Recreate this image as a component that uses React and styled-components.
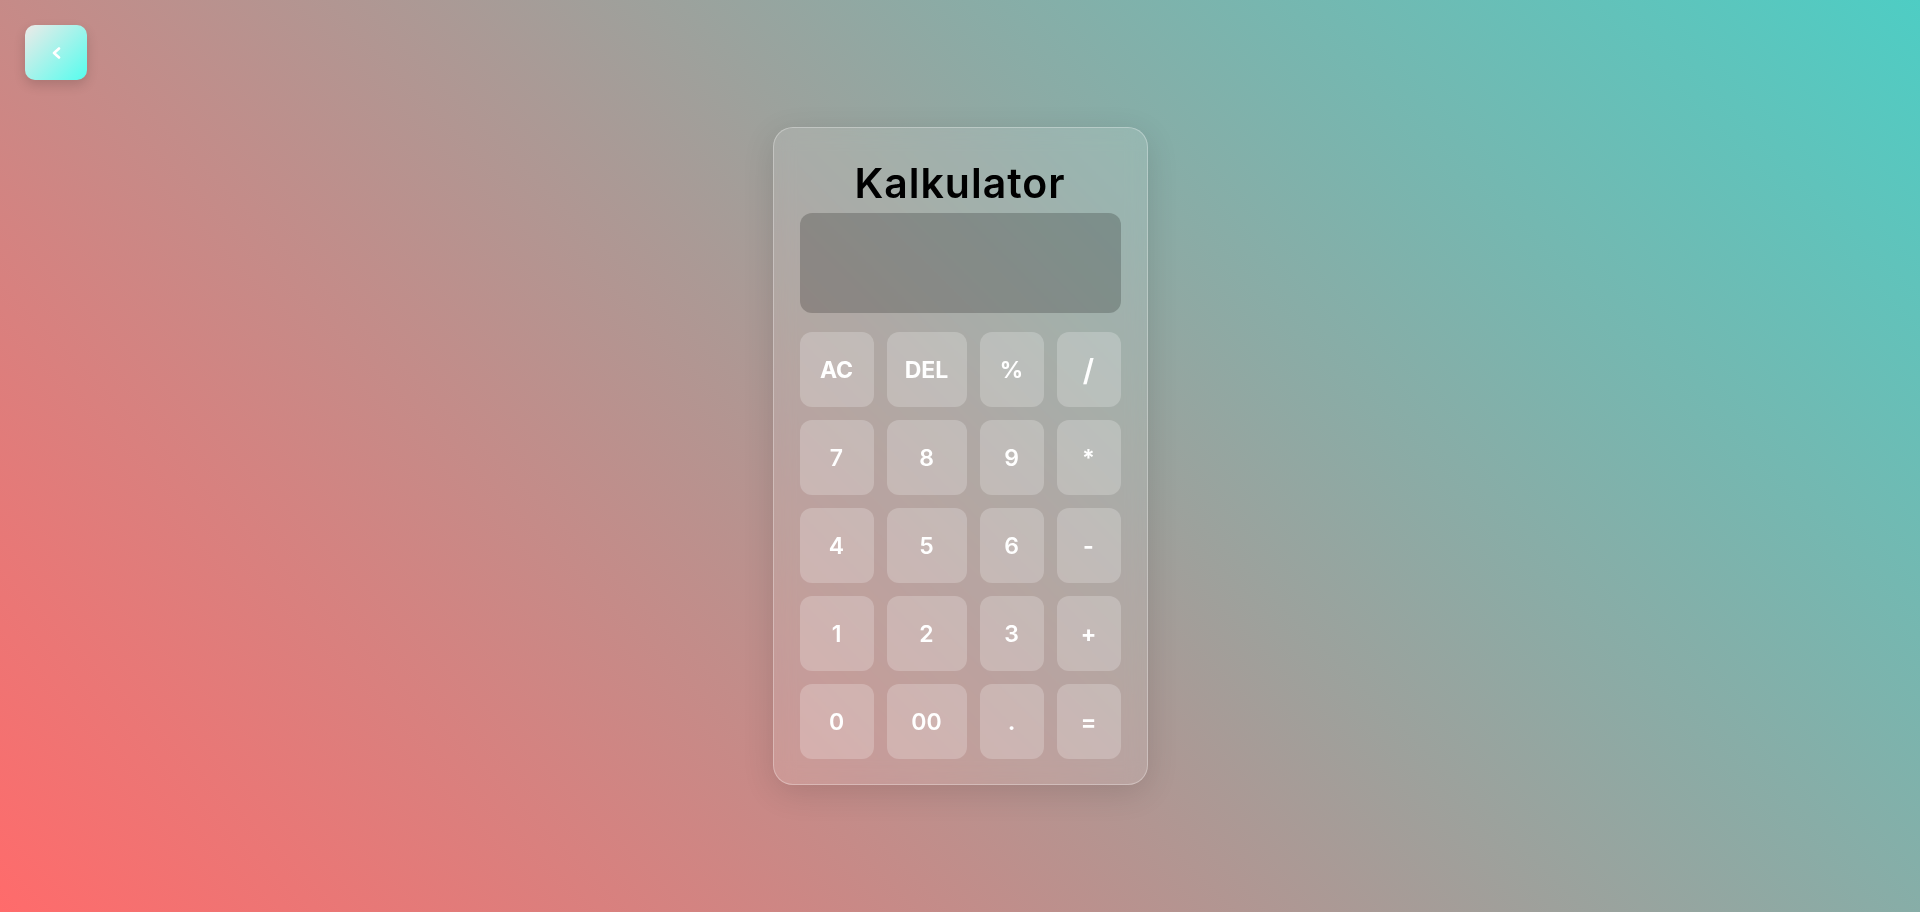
import React from 'react';
import styled, { createGlobalStyle } from 'styled-components';

const GlobalStyle = createGlobalStyle`
  * {
    box-sizing: border-box;
  }

  body {
    margin: 0;
    font-family: Inter, "Noto Sans", sans-serif;
  }
`;

const Page = styled.div`
  position: relative;
  min-height: 100vh;
  display: flex;
  align-items: center;
  justify-content: center;
  background: linear-gradient(45deg, #ff6b6b 0%, #4ecdc4 100%);
`;

const BackButton = styled.button`
  position: absolute;
  top: 25px;
  left: 25px;
  width: 62px;
  height: 55px;
  border: none;
  border-radius: 10px;
  display: flex;
  align-items: center;
  justify-content: center;
  background: linear-gradient(135deg, #eeeae8 0%, #55fdee 100%);
  box-shadow: 0 5px 12px rgba(0, 0, 0, 0.15);
  cursor: pointer;

  svg {
    width: 10px;
    height: 12px;
  }
`;

const Card = styled.div`
  width: 375px;
  padding: 25px 26px 25px;
  border: 1px solid rgba(255, 255, 255, 0.3);
  border-radius: 20px;
  background: rgba(255, 255, 255, 0.12);
  backdrop-filter: blur(10px);
  box-shadow: 0 8px 32px rgba(0, 0, 0, 0.12);
`;

const Title = styled.h1`
  margin: 6px 0 6px;
  font-size: 41px;
  line-height: 48px;
  font-weight: 600;
  letter-spacing: 1px;
  color: #000;
  text-align: center;
`;

const Display = styled.div`
  height: 100px;
  margin-bottom: 19px;
  border-radius: 12px;
  background: rgba(0, 0, 0, 0.2);
`;

const Keypad = styled.div`
  display: grid;
  grid-template-columns: 74px 80px 64px 64px;
  grid-auto-rows: 75px;
  gap: 13px;
`;

const Key = styled.button`
  border: none;
  border-radius: 12px;
  background: rgba(255, 255, 255, 0.22);
  color: #fff;
  font-family: Inter, "Noto Sans", sans-serif;
  font-size: ${(p) => (p.$big ? '30px' : '23px')};
  font-weight: ${(p) => (p.$bold ? 700 : 600)};
  cursor: pointer;
  display: flex;
  align-items: center;
  justify-content: center;
  padding: 0;
`;

const keys = [
  { label: 'AC', bold: true },
  { label: 'DEL', bold: true },
  { label: '%', bold: true },
  { label: '/', big: true },
  { label: '7' },
  { label: '8' },
  { label: '9' },
  { label: '*', bold: true },
  { label: '4' },
  { label: '5' },
  { label: '6' },
  { label: '-', bold: true },
  { label: '1' },
  { label: '2' },
  { label: '3' },
  { label: '+', bold: true },
  { label: '0' },
  { label: '00' },
  { label: '.', bold: true },
  { label: '=', bold: true },
];

function App() {
  return (
    <>
      <GlobalStyle />
      <Page>
        <BackButton aria-label="Kembali">
          <svg viewBox="0 0 10 12">
            <path d="M8 1.5 L3 6 L8 10.5" fill="none" stroke="#fff" strokeWidth="2.6" strokeLinecap="round" strokeLinejoin="round" />
          </svg>
        </BackButton>
        <Card>
          <Title>Kalkulator</Title>
          <Display />
          <Keypad>
            {keys.map((k) => (
              <Key key={k.label} $bold={k.bold} $big={k.big}>
                {k.label}
              </Key>
            ))}
          </Keypad>
        </Card>
      </Page>
    </>
  );
}

export default App;
